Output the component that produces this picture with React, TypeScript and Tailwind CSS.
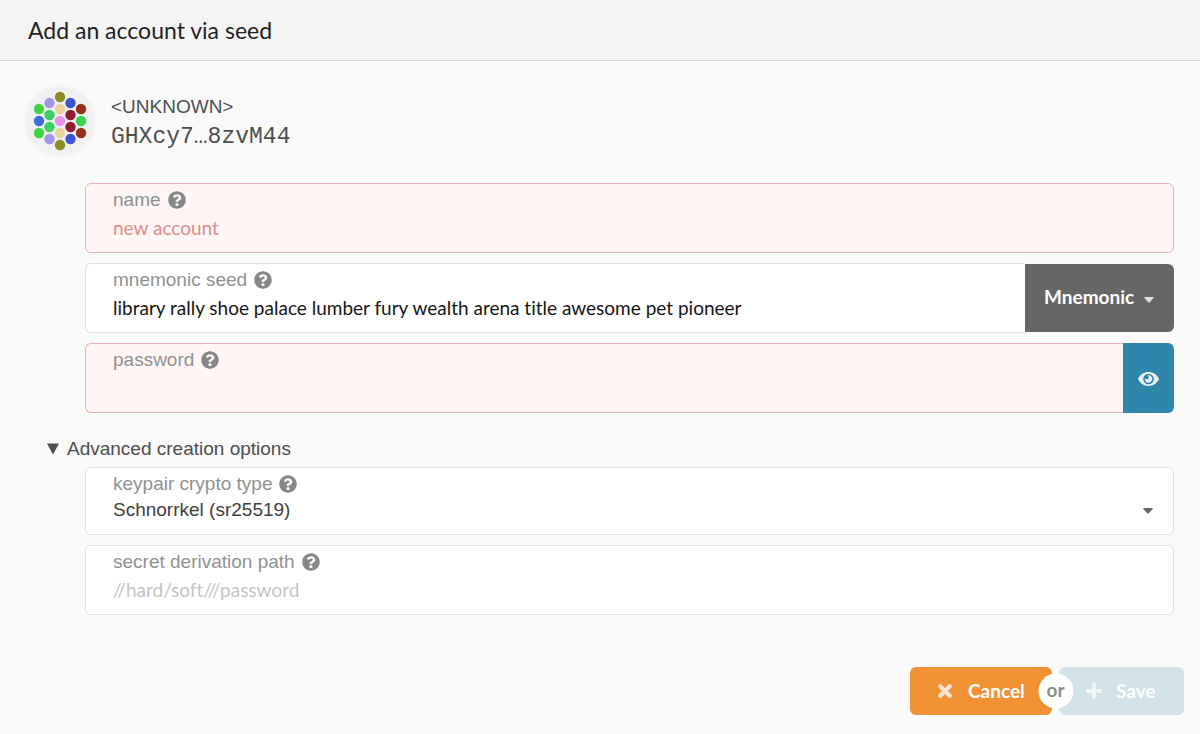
import { useId, useState } from 'react';
import type { ReactNode } from 'react';
import { FaQuestionCircle } from 'react-icons/fa';

const DOTS: [number, number, string][] = [
  [32, 8, '#8e8a24'],
  [21.5, 14, '#a497ea'],
  [42.5, 14, '#3b55d3'],
  [11, 20, '#3fd345'],
  [32, 20, '#e8d398'],
  [53, 20, '#953320'],
  [21.5, 26, '#3bd164'],
  [42.5, 26, '#911d35'],
  [11, 32, '#3d70d3'],
  [32, 32, '#e693ea'],
  [53, 32, '#3bd34f'],
  [21.5, 38, '#3bd164'],
  [42.5, 38, '#911d35'],
  [11, 44, '#3fd345'],
  [32, 44, '#e8d398'],
  [53, 44, '#953320'],
  [21.5, 50, '#a497ea'],
  [42.5, 50, '#3b55d3'],
  [32, 56, '#8e8a24'],
];

function IdentityIcon() {
  return (
    <svg viewBox="0 0 64 64" className="size-16 shrink-0 rounded-full bg-[#f1f1f1] shadow-[0_0_4px_3px_#ededed]" aria-hidden="true">
      {DOTS.map(([x, y, fill]) => (
        <circle key={`${x}-${y}`} cx={x} cy={y} r="5.2" fill={fill} />
      ))}
    </svg>
  );
}

function Caret({ className }: { className: string }) {
  return (
    <svg viewBox="0 0 10 6" className={`pointer-events-none absolute h-[6px] w-[10px] ${className}`} aria-hidden="true">
      <path d="M0.6 0H9.4Q10 .3 9.6 .9L5.5 5.4Q5 5.8 4.5 5.4L.4 .9Q0 .3 .6 0Z" fill="currentColor" />
    </svg>
  );
}

function EyeIcon() {
  return (
    <svg viewBox="0 0 21 14" className="h-[14px] w-[21px]" aria-hidden="true">
      <path
        fill="currentColor"
        fillRule="evenodd"
        d="M10.5 0C15 0 18.8 2.600 20.800 6.400Q21.100 7 20.800 7.600C18.800 11.400 15 14 10.500 14C6 14 2.200 11.400 .200 7.600Q-.100 7 .200 6.400C2.200 2.600 6 0 10.500 0ZM10.500 1.700A5.300 5.300 0 1 0 10.500 12.300A5.300 5.300 0 1 0 10.500 1.700Z"
      />
      <path fill="currentColor" d="M10.500 3.300A3.700 3.700 0 1 1 7 5.900A1.900 1.900 0 1 0 9.400 3.500Q9.900 3.300 10.500 3.300Z" />
    </svg>
  );
}

function CrossIcon() {
  return (
    <svg viewBox="0 0 18 18" className="size-[18px] text-[#fbe3cd]" aria-hidden="true">
      <path d="M4.300 4.300L13.700 13.700M13.700 4.300L4.300 13.700" stroke="currentColor" strokeWidth="4.400" strokeLinecap="round" />
    </svg>
  );
}

function PlusIcon() {
  return (
    <svg viewBox="0 0 18 18" className="size-[18px] text-[#f0f5f8]" aria-hidden="true">
      <path
        d="M7.800 1H10.200Q11 1 11 1.800V7H16.200Q17 7 17 7.800V10.200Q17 11 16.200 11H11V16.200Q11 17 10.200 17H7.800Q7 17 7 16.200V11H1.800Q1 11 1 10.200V7.800Q1 7 1.800 7H7V1.800Q7 1 7.800 1Z"
        fill="currentColor"
      />
    </svg>
  );
}

type FieldProps = {
  id: string;
  label: string;
  error?: boolean;
  children: ReactNode;
  action?: ReactNode;
};

function Field({ id, label, error, children, action }: FieldProps) {
  const tone = error ? 'border-[#e7b4b5] bg-[#fff6f5]' : 'border-[#dedede] bg-white';
  return (
    <div className="flex">
      <div className={`min-w-0 flex-1 border pb-2 pl-[27px] pt-1 ${tone} ${action ? 'rounded-l-md border-r-0' : 'rounded-md'}`}>
        <label htmlFor={id} className="flex items-center gap-[7px] text-[19px] leading-6 text-[#919191]">
          {label}
          <FaQuestionCircle className="size-[18px] text-[#878787]" aria-hidden="true" />
        </label>
        {children}
      </div>
      {action}
    </div>
  );
}

const inputClass =
  'block h-8 w-full bg-transparent pb-px font-[Lato,sans-serif] text-[19px] outline-none [font-variant-ligatures:none]';

export default function App() {
  const uid = useId();
  const [name, setName] = useState('');
  const [seed, setSeed] = useState('library rally shoe palace lumber fury wealth arena title awesome pet pioneer');
  const [password, setPassword] = useState('');
  const [visible, setVisible] = useState(false);
  const [path, setPath] = useState('');

  return (
    <div className="flex min-h-screen flex-col bg-[#fafafa] font-['Liberation_Sans',Arial,sans-serif] text-[#4e4e4e]">
      <header className="border-b border-[#d4d4d4] bg-[#f4f4f4] px-7 py-[14px]">
        <h1 className="font-[Lato,sans-serif] text-[23px] leading-8 text-[#1f1f1f]">Add an account via seed</h1>
      </header>

      <main className="px-7 pt-7">
        <div className="flex items-center gap-[19px]">
          <IdentityIcon />
          <div className="pt-1">
            <div className="text-[19px] leading-7">&lt;UNKNOWN&gt;</div>
            <div className="font-['Liberation_Mono',monospace] text-[23px] leading-8">GHXcy7…8zvM44</div>
          </div>
        </div>

        <div className="-mr-0.5 ml-[57px] mt-[30px] flex flex-col gap-[10px]">
          <Field id={`${uid}name`} label="name" error>
            <input
              id={`${uid}name`}
              value={name}
              onChange={(e) => setName(e.target.value)}
              placeholder="new account"
              className={`${inputClass} text-[#9f3a38] placeholder:text-[#de8d8d]`}
            />
          </Field>
          <Field
            id={`${uid}seed`}
            label="mnemonic seed"
            action={
              <div className="relative flex py-px">
                <select
                  aria-label="seed type"
                  className="w-[149px] appearance-none rounded-r-md bg-[#666666] pb-0.5 pl-[19px] pr-8 font-[Lato,sans-serif] text-[19px] font-bold text-white"
                >
                  <option>Mnemonic</option>
                  <option>Raw seed</option>
                </select>
                <Caret className="right-5 top-[34px] text-[#dddddd]" />
              </div>
            }
          >
            <input
              id={`${uid}seed`}
              value={seed}
              onChange={(e) => setSeed(e.target.value)}
              className={`${inputClass} text-[#161616]`}
            />
          </Field>
          <Field
            id={`${uid}pass`}
            label="password"
            error
            action={
              <button
                type="button"
                aria-label="show password"
                onClick={() => setVisible(!visible)}
                className="flex w-[51px] items-center justify-center rounded-r-md bg-[#2e86ab] pt-0.5 text-[#eaf3f7]"
              >
                <EyeIcon />
              </button>
            }
          >
            <input
              id={`${uid}pass`}
              type={visible ? 'text' : 'password'}
              value={password}
              onChange={(e) => setPassword(e.target.value)}
              className={`${inputClass} text-[#9f3a38]`}
            />
          </Field>
        </div>

        <details open className="-mr-0.5 mt-6">
          <summary className="ml-[19px] flex cursor-pointer list-none items-center gap-2 text-[19px] leading-6">
            <svg viewBox="0 0 12 12" className="size-3" aria-hidden="true">
              <path d="M0 0.5H12L6 11.5Z" fill="currentColor" />
            </svg>
            Advanced creation options
          </summary>
          <div className="ml-[57px] mt-1.5 flex flex-col gap-[10px]">
            <Field id={`${uid}type`} label="keypair crypto type">
              <div className="relative">
                <select
                  id={`${uid}type`}
                  className="block h-[30px] w-full appearance-none bg-transparent pb-1 text-[19px] text-[#404040] outline-none"
                >
                  <option>Schnorrkel (sr25519)</option>
                  <option>Edwards (ed25519)</option>
                </select>
                <Caret className="right-5 top-3 text-[#666666]" />
              </div>
            </Field>
            <Field id={`${uid}path`} label="secret derivation path">
              <input
                id={`${uid}path`}
                value={path}
                onChange={(e) => setPath(e.target.value)}
                placeholder="//hard/soft///password"
                className={`${inputClass} text-[#161616] placeholder:text-[#c4c4c4]`}
              />
            </Field>
          </div>
        </details>
      </main>

      <footer className="mt-auto flex justify-end px-4 pb-[19px] pt-6 font-[Lato,sans-serif] text-[19px] font-bold text-white">
        <button type="button" className="flex h-12 w-[142px] items-center gap-[14px] rounded-md bg-[#f19135] pl-[26px]">
          <CrossIcon />
          Cancel
        </button>
        <div className="relative w-[7px]">
          <span className="absolute left-1/2 top-1/2 flex size-[35px] -translate-x-1/2 -translate-y-1/2 items-center justify-center rounded-full bg-white pb-0.5 text-[#8c8c8c]">
            or
          </span>
        </div>
        <button type="button" disabled className="flex h-12 w-[125px] items-center gap-[13px] rounded-md bg-[#d2e3ea] pl-[26px]">
          <PlusIcon />
          Save
        </button>
      </footer>
    </div>
  );
}
